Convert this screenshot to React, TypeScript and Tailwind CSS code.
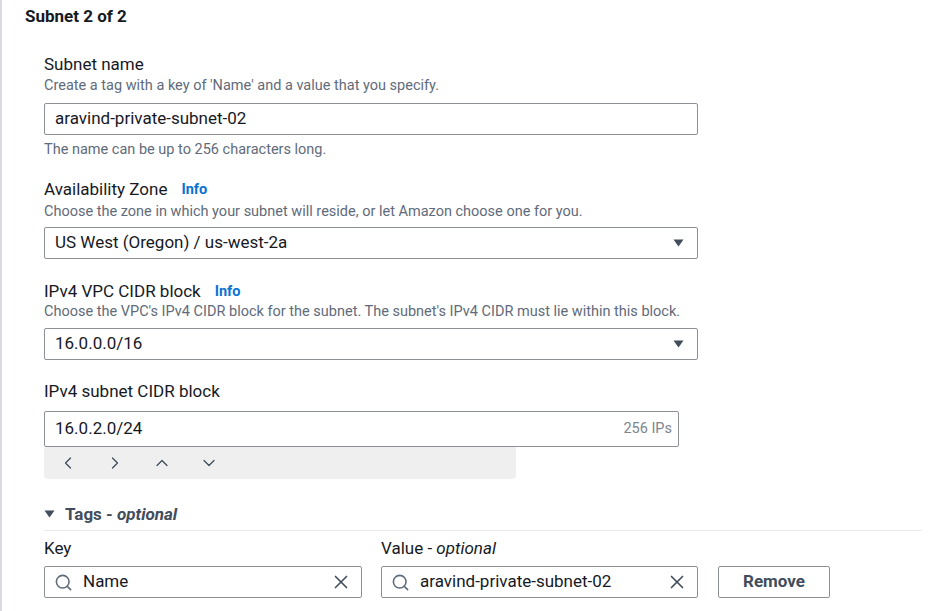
import { ChevronLeft, ChevronRight, ChevronUp, ChevronDown, Search, X } from "lucide-react";

const Caret = () => (
  <svg width="11" height="8" viewBox="0 0 11 8">
    <path d="M0.5 0.5 H10.5 L5.5 7.5 Z" fill="#414d5c" />
  </svg>
);

const Label = ({ text, info }: { text: string; info?: boolean }) => (
  <div className="flex h-[20px] items-center gap-[14px] text-[17px] leading-[20px] text-[#16191f]">
    <span>{text}</span>
    {info && <span className="pt-[1px] text-[14.5px] font-bold leading-[20px] text-[#0972d3]">Info</span>}
  </div>
);

const Desc = ({ text, className }: { text: string; className?: string }) => (
  <div className={`text-[14.5px] leading-[18px] text-[#5f6b7a] ${className ?? ""}`}>{text}</div>
);

const SelectBox = ({ value, className }: { value: string; className?: string }) => (
  <div
    className={`flex h-[32px] w-[654px] items-center justify-between rounded-[2px] border border-[#8d9096] pl-[10px] pr-[13px] text-[17px] text-[#16191f] ${className ?? ""}`}
  >
    <span>{value}</span>
    <Caret />
  </div>
);

const TagInput = ({ value, width }: { value: string; width: string }) => (
  <div
    className={`flex h-[32px] ${width} items-center rounded-[2px] border border-[#8d9096] pl-[9px] pr-[9px] text-[17px] text-[#16191f]`}
  >
    <Search size={19} strokeWidth={2} color="#5f6b7a" />
    <span className="ml-[10px] flex-1">{value}</span>
    <X size={22} strokeWidth={1.8} color="#414d5c" />
  </div>
);

export default function App() {
  return (
    <div
      className="flex h-[611px] w-[940px] bg-white"
      style={{ fontFamily: "Roboto, 'Liberation Sans', sans-serif" }}
    >
      <div className="w-[2px] bg-[#d9dbde]" />
      <div className="flex flex-1 flex-col pt-[6px]">
        <div className="pl-[23px] text-[17px] font-bold leading-[20px] text-[#16191f]">Subnet 2 of 2</div>

        <div className="flex flex-col pl-[42px]">
          <div className="mt-[28px]">
            <Label text="Subnet name" />
          </div>
          <Desc className="mt-[3px]" text="Create a tag with a key of 'Name' and a value that you specify." />
          <div className="mt-[8px] flex h-[32px] w-[654px] items-center rounded-[2px] border border-[#8d9096] pl-[10px] text-[17px] text-[#16191f]">
            aravind-private-subnet-02
          </div>
          <Desc className="mt-[6px]" text="The name can be up to 256 characters long." />

          <div className="mt-[20px]">
            <Label text="Availability Zone" info />
          </div>
          <Desc className="mt-[4px]" text="Choose the zone in which your subnet will reside, or let Amazon choose one for you." />
          <SelectBox className="mt-[6px]" value="US West (Oregon) / us-west-2a" />

          <div className="mt-[22px]">
            <Label text="IPv4 VPC CIDR block" info />
          </div>
          <Desc
            className="mt-[2px]"
            text="Choose the VPC's IPv4 CIDR block for the subnet. The subnet's IPv4 CIDR must lie within this block."
          />
          <SelectBox className="mt-[7px]" value="16.0.0.0/16" />

          <div className="mt-[21px]">
            <Label text="IPv4 subnet CIDR block" />
          </div>
          <div className="mt-[10px] flex h-[36px] w-[635px] items-center justify-between rounded-[2px] border border-[#8d9096] pl-[10px] pr-[6px] text-[17px] text-[#16191f]">
            <span>16.0.2.0/24</span>
            <span className="text-[14.5px] text-[#7d8590]">256 IPs</span>
          </div>
          <div className="flex h-[32px] w-[472px] items-center gap-[27px] rounded-b-[4px] bg-[#efeff0] pl-[14px]">
            <ChevronLeft size={20} strokeWidth={1.5} color="#414d5c" />
            <ChevronRight size={20} strokeWidth={1.5} color="#414d5c" />
            <ChevronUp size={20} strokeWidth={1.5} color="#414d5c" />
            <ChevronDown size={20} strokeWidth={1.5} color="#414d5c" />
          </div>

          <div className="mt-[25px] flex h-[20px] items-center gap-[10px] text-[17px] font-bold leading-[20px] text-[#414d5c]">
            <Caret />
            <span>
              Tags - <span className="italic">optional</span>
            </span>
          </div>
          <div className="mt-[6px] mr-[18px] h-px bg-[#e9ebed]" />

          <div className="mt-[7px] flex h-[20px] text-[17px] leading-[20px] text-[#16191f]">
            <span className="w-[337px]">Key</span>
            <span>
              Value - <span className="italic">optional</span>
            </span>
          </div>
          <div className="mt-[8px] flex items-center">
            <TagInput value="Name" width="w-[318px]" />
            <div className="ml-[19px]">
              <TagInput value="aravind-private-subnet-02" width="w-[317px]" />
            </div>
            <div className="ml-[20px] flex h-[32px] w-[112px] items-center justify-center rounded-[2px] border border-[#8d9096] text-[17px] font-bold text-[#414d5c]">
              Remove
            </div>
          </div>
        </div>
      </div>
    </div>
  );
}
